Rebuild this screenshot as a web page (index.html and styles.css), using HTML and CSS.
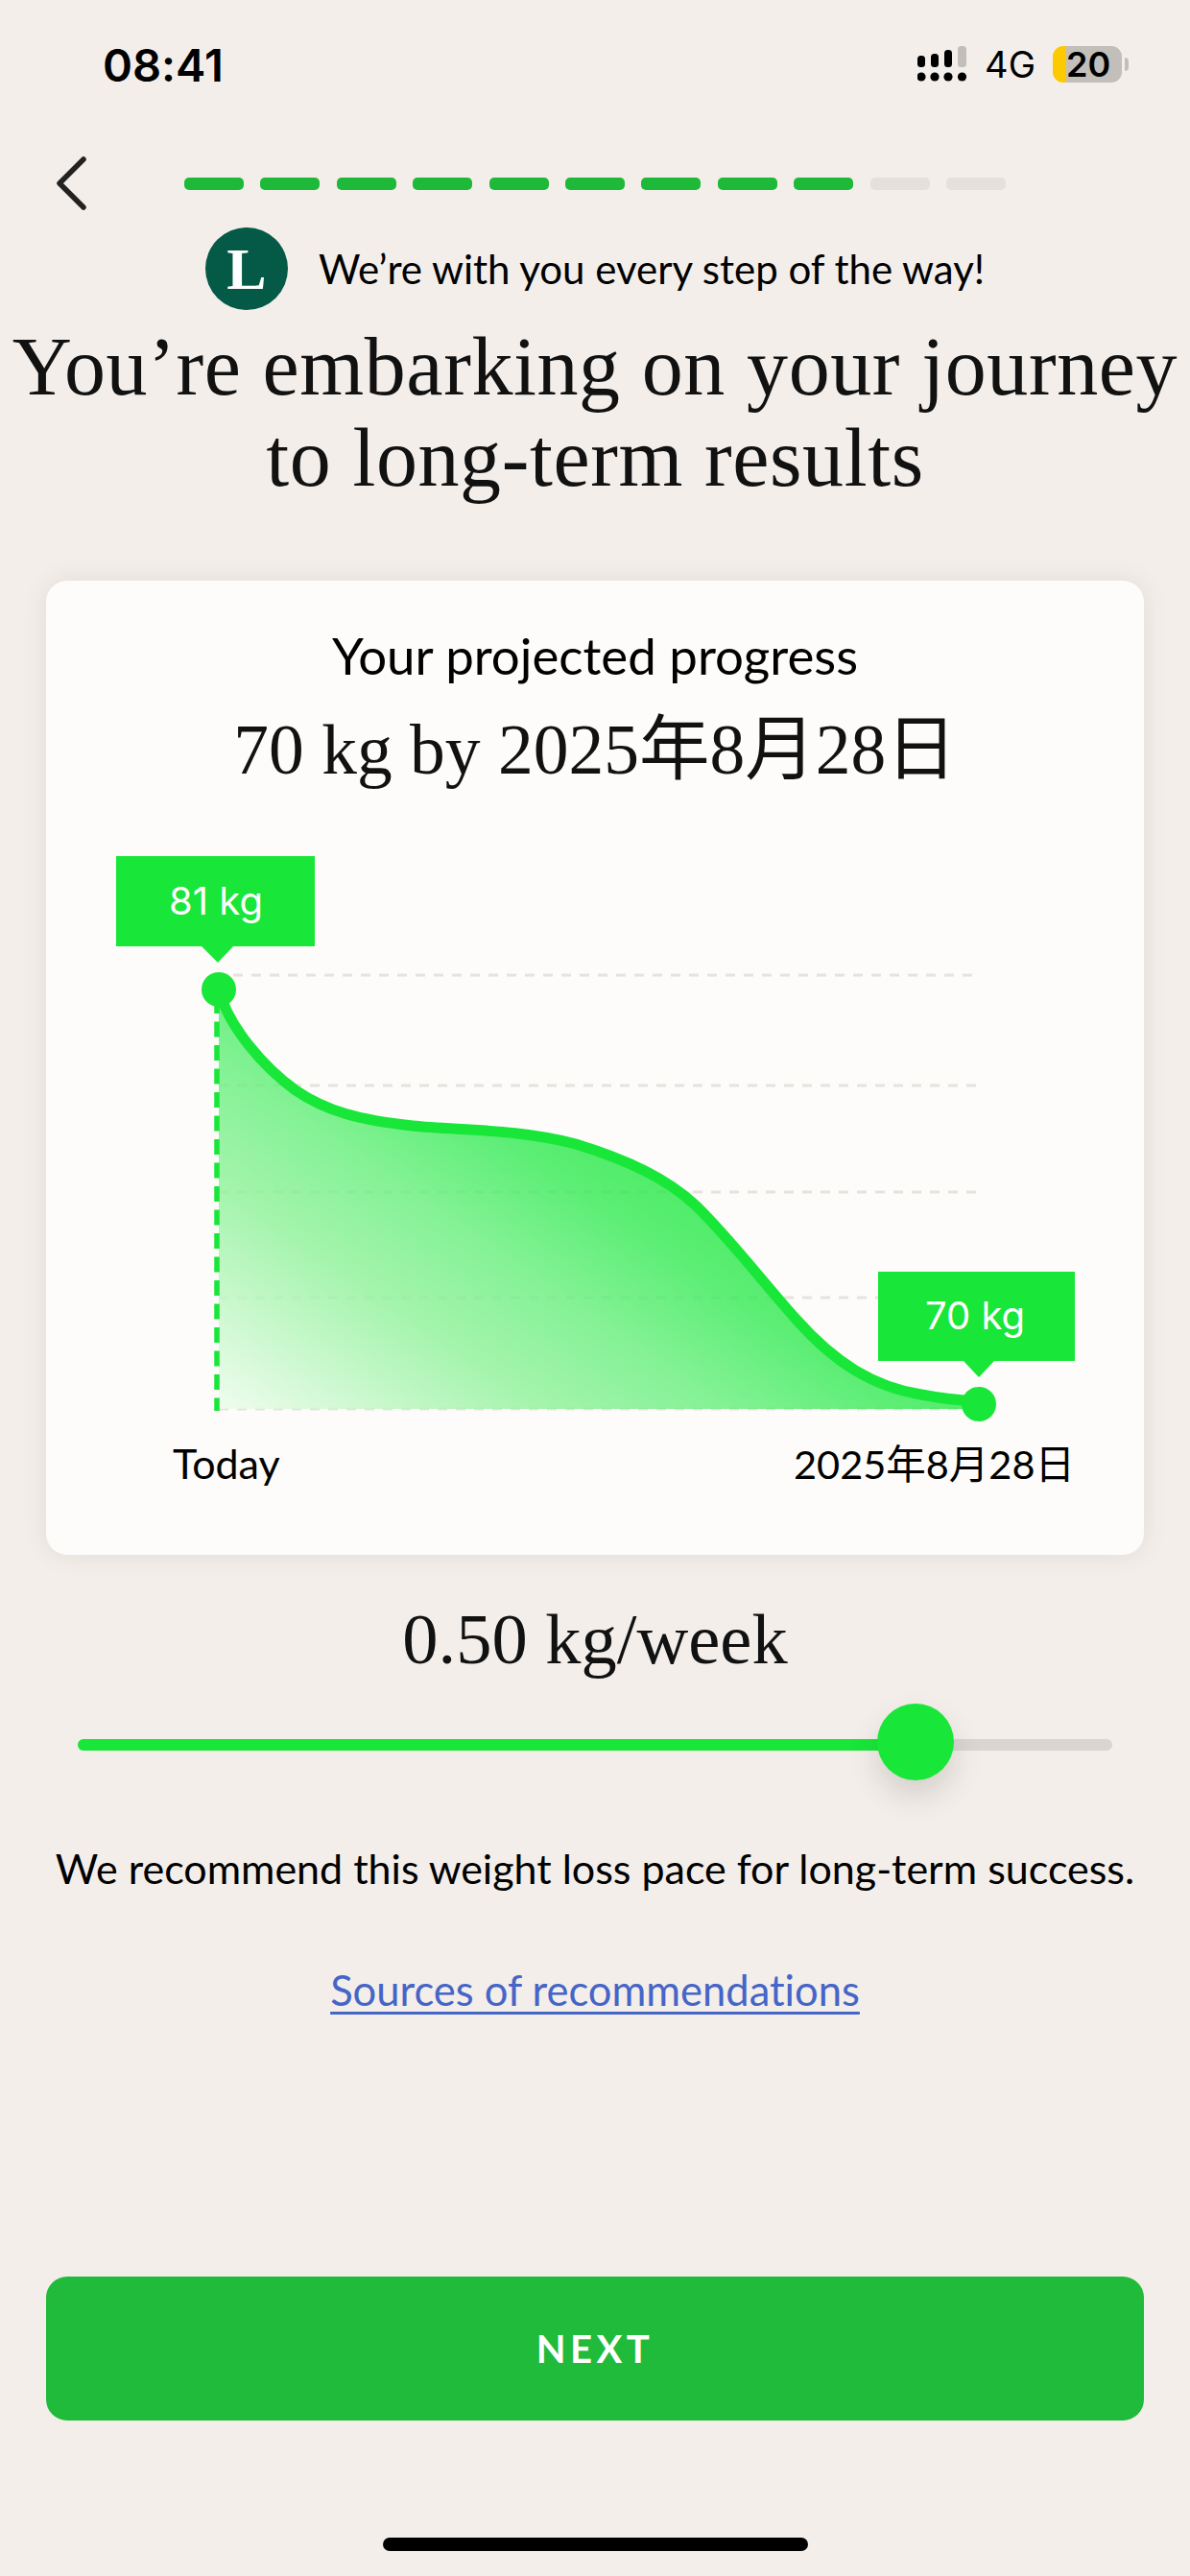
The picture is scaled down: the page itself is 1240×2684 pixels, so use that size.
FILE: index.html
```html
<!DOCTYPE html>
<html lang="en">
<head>
    <meta charset="UTF-8" />
    <title>Your projected progress</title>
    <link rel="stylesheet" href="styles.css">
</head>
<body>
<div class="status-bar">
    <span class="clock">08:41</span>
    <div class="status-icons">
        <svg class="signal" width="52" height="38" viewBox="0 0 52 38">
            <rect x="0" y="10" width="8" height="12" rx="3.5" fill="#000"/>
            <rect x="14" y="8" width="8" height="14" rx="3.5" fill="#000"/>
            <rect x="28" y="4" width="8" height="18" rx="3.5" fill="#000"/>
            <rect x="42" y="0" width="9" height="22" rx="3.5" fill="#c2bfba"/>
            <circle cx="4" cy="32" r="4.6" fill="#000"/>
            <circle cx="18" cy="32" r="4.6" fill="#000"/>
            <circle cx="32" cy="32" r="4.6" fill="#000"/>
            <circle cx="46.5" cy="32" r="4.6" fill="#000"/>
        </svg>
        <span class="network">4G</span>
        <span class="battery">20</span>
    </div>
</div>

<div class="nav-row">
    <svg class="back" width="36" height="58" viewBox="0 0 36 58">
        <path d="M31 4 L6 29 L31 54" fill="none" stroke="#222" stroke-width="5.5" stroke-linecap="round" stroke-linejoin="round"/>
    </svg>
    <div class="steps">
        <span class="step done"></span>
        <span class="step done"></span>
        <span class="step done"></span>
        <span class="step done"></span>
        <span class="step done"></span>
        <span class="step done"></span>
        <span class="step done"></span>
        <span class="step done"></span>
        <span class="step done"></span>
        <span class="step"></span>
        <span class="step"></span>
    </div>
</div>

<div class="coach">
    <span class="avatar">L</span>
    <span class="coach-text">We’re with you every step of the way!</span>
</div>

<h1>You’re embarking on your journey<br>to long-term results</h1>

<div class="card">
    <div class="card-label">Your projected progress</div>
    <div class="card-goal">70 kg by 2025年8月28日</div>
    <svg class="chart" width="1144" height="606" viewBox="48 880 1144 606">
        <defs>
            <linearGradient id="areaFill" gradientUnits="userSpaceOnUse" x1="235" y1="1470" x2="500" y2="1083">
                <stop offset="0" stop-color="#ebfceb"/>
                <stop offset="0.4" stop-color="#8ff29a"/>
                <stop offset="0.63" stop-color="#66ef7c"/>
                <stop offset="0.85" stop-color="#34ea54"/>
                <stop offset="1" stop-color="#22e842"/>
            </linearGradient>
        </defs>
        <g class="grid-lines">
            <line x1="243" y1="1016" x2="1019" y2="1016"/>
            <line x1="228" y1="1131" x2="1019" y2="1131"/>
            <line x1="228" y1="1242" x2="1019" y2="1242"/>
            <line x1="228" y1="1352" x2="915" y2="1352"/>
            <line x1="228" y1="1468" x2="1010" y2="1468"/>
        </g>
        <path class="area" d="M228 1031 C238 1070 275 1112 308 1136 C340 1158 375 1167 430 1173 C480 1178 540 1176 600 1192 C655 1209 695 1228 725 1256 C760 1290 790 1330 830 1375 C870 1420 910 1445 960 1453 C985 1458 1000 1459 1020 1460 L1020 1468 L228 1468 Z"/>
        <line class="start-line" x1="226" y1="1040" x2="226" y2="1470"/>
        <path class="curve" d="M228 1031 C238 1070 275 1112 308 1136 C340 1158 375 1167 430 1173 C480 1178 540 1176 600 1192 C655 1209 695 1228 725 1256 C760 1290 790 1330 830 1375 C870 1420 910 1445 960 1453 C985 1458 1000 1459 1020 1460"/>
        <circle class="dot" cx="228" cy="1031" r="18"/>
        <circle class="dot" cx="1020" cy="1463" r="18"/>
        <path class="tag" d="M121 892 H328 V986 H243 L227 1003 L210 986 H121 Z"/>
        <text class="tag-text" x="225" y="953">81 kg</text>
        <path class="tag" d="M915 1325 H1120 V1418 H1036 L1020 1435 L1004 1418 H915 Z"/>
        <text class="tag-text" x="1016" y="1385">70 kg</text>
    </svg>
    <div class="axis">
        <span>Today</span>
        <span class="axis-date">2025年8月28日</span>
    </div>
</div>

<div class="pace">0.50 kg/week</div>

<div class="slider">
    <div class="slider-fill"></div>
    <div class="slider-knob"></div>
</div>

<p class="note">We recommend this weight loss pace for long-term success.</p>
<a class="sources" href="#">Sources of recommendations</a>

<button class="next-btn">NEXT</button>
<div class="home-bar"></div>
</body>
</html>
```

FILE: styles.css
```css
body {
    font-family: Lato, "Noto Sans CJK JP", sans-serif;
    font-variant-ligatures: none;
    background: #f3eeea;
    margin: 0;
    height: 2684px;
    overflow: hidden;
    color: #000;
}
.status-bar {
    display: flex;
    justify-content: space-between;
    align-items: center;
    height: 134px;
    padding: 0 71px 11px 107px;
}
.clock {
    font-family: Inter, sans-serif;
    font-size: 47px;
    font-weight: 600;
}
.status-icons {
    display: flex;
    align-items: center;
    gap: 18px;
}
.network {
    font-family: Inter, sans-serif;
    font-size: 38px;
}
.battery {
    position: relative;
    width: 58px;
    height: 38px;
    padding-left: 14px;
    border-radius: 11px;
    background: linear-gradient(90deg, #fdc900 14px, #c2bfba 14px);
    font-family: Inter, sans-serif;
    font-size: 36px;
    font-weight: 600;
    line-height: 38px;
}
.battery::after {
    content: "";
    position: absolute;
    right: -7px;
    top: 12px;
    width: 4px;
    height: 14px;
    border-radius: 0 4px 4px 0;
    background: #c2bfba;
}
.nav-row {
    display: flex;
    align-items: center;
    height: 92px;
    padding: 0 192px 0 56px;
}
.back { flex: none; margin-right: 100px; }
.steps {
    flex: 1;
    display: grid;
    grid-template-columns: repeat(11, 1fr);
    gap: 17.5px;
}
.step {
    height: 13px;
    border-radius: 5px;
    background: #e6e0da;
}
.step.done { background: #1fb939; }
.coach {
    display: flex;
    justify-content: center;
    align-items: center;
    gap: 32px;
    height: 86px;
}
.avatar {
    width: 86px;
    height: 86px;
    border-radius: 50%;
    background: #045a46;
    color: #fff;
    font-family: "Liberation Serif", serif;
    font-size: 62px;
    font-weight: 700;
    line-height: 86px;
    text-align: center;
}
.coach-text { font-size: 42px; }
h1 {
    margin: 12px 0 80px;
    font-family: "Liberation Serif", serif;
    font-size: 86px;
    font-weight: 400;
    letter-spacing: 0.6px;
    line-height: 95px;
    text-align: center;
    color: #111;
    white-space: nowrap;
}
.card {
    height: 1015px;
    margin: 0 48px;
    border-radius: 22px;
    background: #fdfcfa;
    box-shadow: 0 0 24px rgba(120, 100, 80, 0.12);
    overflow: hidden;
}
.card-label {
    margin-top: 48px;
    font-size: 52.8px;
    line-height: 60px;
    text-align: center;
}
.card-goal {
    margin-top: 24px;
    font-family: "Liberation Serif", "Noto Sans CJK JP", serif;
    font-size: 73.5px;
    line-height: 90px;
    text-align: center;
    color: #111;
}
.chart {
    display: block;
    margin-top: 53px;
}
.grid-lines line {
    stroke: #e8e2dc;
    stroke-width: 3;
    stroke-dasharray: 10 9;
}
.area { fill: url(#areaFill); fill-opacity: 0.8; }
.start-line {
    stroke: #18e638;
    stroke-width: 5.5;
    stroke-dasharray: 16 8.5;
}
.curve {
    fill: none;
    stroke: #18e638;
    stroke-width: 11;
}
.dot, .tag { fill: #18e638; }
.tag-text {
    fill: #fff;
    font-family: Inter, sans-serif;
    font-size: 40px;
    text-anchor: middle;
}
.axis {
    display: flex;
    justify-content: space-between;
    margin-top: 14px;
    padding: 0 72px 0 132px;
    font-size: 43px;
    line-height: 50px;
}
.axis-date { font-size: 41.5px; }
.pace {
    margin-top: 48px;
    font-family: "Liberation Serif", serif;
    font-size: 74.5px;
    line-height: 80px;
    text-align: center;
    color: #111;
}
.slider {
    position: relative;
    height: 12px;
    margin: 64px 81px 0;
    border-radius: 6px;
    background: #d8d5d2;
}
.slider-fill {
    width: 873px;
    height: 12px;
    border-radius: 6px 0 0 6px;
    background: #18e638;
}
.slider-knob {
    position: absolute;
    left: 833px;
    top: -37px;
    width: 80px;
    height: 80px;
    border-radius: 50%;
    background: #18e638;
    box-shadow: 0 16px 30px rgba(80, 70, 60, 0.18);
}
.note {
    margin: 93px 0 0;
    font-size: 43px;
    line-height: 60px;
    text-align: center;
}
.sources {
    display: block;
    width: fit-content;
    margin: 66px auto 0;
    font-size: 43.5px;
    line-height: 60px;
    color: #4565c8;
    text-decoration: underline;
    text-decoration-thickness: 3px;
    text-underline-offset: 6px;
}
.next-btn {
    display: block;
    width: 1144px;
    height: 150px;
    margin: 269px 48px 0;
    border: none;
    border-radius: 22px;
    background: #20bb3a;
    color: #fff;
    font-family: Lato, sans-serif;
    font-size: 40px;
    font-weight: 700;
    letter-spacing: 4.5px;
}
.home-bar {
    width: 443px;
    height: 14px;
    margin: 122px auto 0;
    border-radius: 7px;
    background: #000;
}
```
